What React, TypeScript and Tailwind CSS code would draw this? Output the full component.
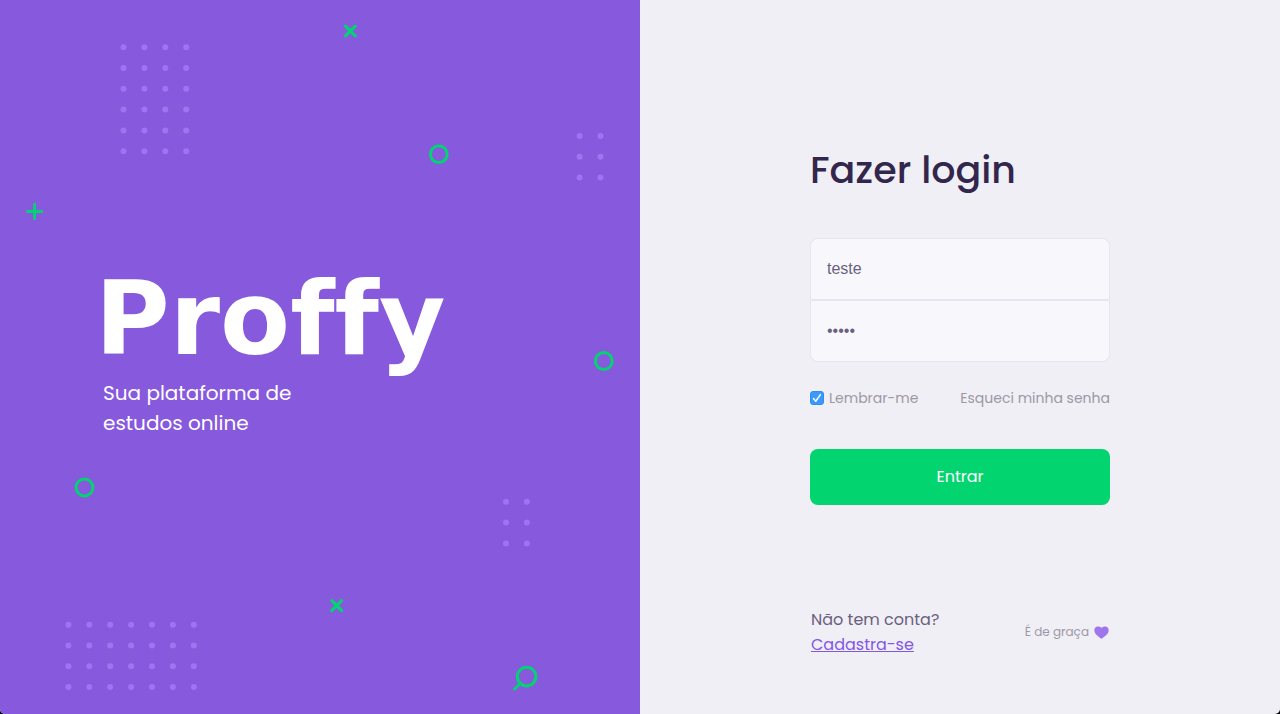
import { useState } from "react";

type DotGrid = { x: number; y: number; cols: number; rows: number };

const dotGrids: DotGrid[] = [
  { x: 123.5, y: 47.2, cols: 4, rows: 6 },
  { x: 579.6, y: 136, cols: 2, rows: 3 },
  { x: 506, y: 501.8, cols: 2, rows: 3 },
  { x: 68.4, y: 624.7, cols: 7, rows: 4 },
];

const rings = [
  { x: 438.8, y: 154.2 },
  { x: 603.8, y: 361 },
  { x: 84.5, y: 487.5 },
];

const crosses = [
  { x: 350.4, y: 31 },
  { x: 336.7, y: 605.6 },
];

function Pattern() {
  return (
    <svg
      aria-hidden="true"
      viewBox="0 0 640 714"
      preserveAspectRatio="xMidYMid slice"
      className="absolute inset-0 h-full w-full"
      fill="none"
    >
      <g fill="#a074f0">
        {dotGrids.map((grid) =>
          Array.from({ length: grid.cols * grid.rows }, (_, i) => (
            <circle
              key={`${grid.x}-${i}`}
              cx={grid.x + (i % grid.cols) * 20.9}
              cy={grid.y + Math.floor(i / grid.cols) * 20.8}
              r="3"
            />
          )),
        )}
      </g>
      <g stroke="#04d373" strokeWidth="3">
        {rings.map((ring) => (
          <circle key={ring.x} cx={ring.x} cy={ring.y} r="8.4" />
        ))}
        {crosses.map((cross) => (
          <path
            key={cross.x}
            strokeWidth="3.2"
            strokeLinecap="round"
            d={`M${cross.x - 4.9} ${cross.y - 4.9}l9.8 9.8m0 -9.8l-9.8 9.8`}
          />
        ))}
        <path strokeWidth="2.9" d="M26.3 211.5h16.6M34.6 203.2v16.6" />
        <circle cx="526.6" cy="676.6" r="9.3" />
        <path d="M520.4 683.2L513.6 690" />
      </g>
    </svg>
  );
}

export default function App() {
  const [user, setUser] = useState("teste");
  const [password, setPassword] = useState("12345");
  const [remember, setRemember] = useState(true);

  return (
    <div className="bg-black font-['Poppins','Inter',sans-serif]">
      <div className="flex min-h-screen overflow-hidden rounded-b-[5px] bg-[#f0eff5]">
        <section className="relative flex w-1/2 flex-col justify-center bg-[#8759dc] px-[103px] text-white">
          <Pattern />
          <div className="relative">
            <p className="-ml-2 pb-4 font-['DejaVu_Sans',sans-serif] text-[102px] leading-[86px] font-bold [font-kerning:none] [font-variant-ligatures:none]">
              Proffy
            </p>
            <p className="text-xl leading-[30px]">
              Sua plataforma de
              <br />
              estudos online
            </p>
          </div>
        </section>

        <main className="flex w-1/2 flex-col items-center justify-center pt-[83px]">
          <form
            className="flex w-[300px] flex-col"
            onSubmit={(event) => event.preventDefault()}
          >
            <h1 className="text-[38px] leading-[60px] font-medium text-[#32264d]">
              Fazer login
            </h1>

            <div className="mt-[38px] flex flex-col font-['Liberation_Sans',sans-serif] text-base text-[#6a6180]">
              <input
                type="text"
                aria-label="Usuário"
                value={user}
                onChange={(event) => setUser(event.target.value)}
                className="h-[62px] rounded-t-lg border border-[#e6e6f0] bg-[#f8f8fc] px-4 outline-none"
              />
              <input
                type="password"
                aria-label="Senha"
                value={password}
                onChange={(event) => setPassword(event.target.value)}
                className="h-[62px] rounded-b-lg border border-[#e6e6f0] bg-[#f8f8fc] px-4 outline-none"
              />
            </div>

            <div className="mt-6 flex items-center justify-between text-sm leading-6 text-[#9c98a6]">
              <label className="flex items-center gap-[5px]">
                <span className="grid size-[14px]">
                  <input
                    type="checkbox"
                    checked={remember}
                    onChange={(event) => setRemember(event.target.checked)}
                    className="peer col-start-1 row-start-1 size-[14px] appearance-none rounded-[3px] border border-[#9c98a6] bg-white checked:border-[#2f8eea] checked:bg-[#3b99fc]"
                  />
                  <svg
                    aria-hidden="true"
                    viewBox="0 0 14 14"
                    className="pointer-events-none invisible col-start-1 row-start-1 size-[14px] peer-checked:visible"
                    fill="none"
                    stroke="white"
                    strokeWidth="1.5"
                    strokeLinecap="round"
                    strokeLinejoin="round"
                  >
                    <path d="M3.5 7.6L5.8 10.2L10.4 3.6" />
                  </svg>
                </span>
                Lembrar-me
              </label>
              <a href="#senha">Esqueci minha senha</a>
            </div>

            <button
              type="submit"
              className="mt-[39px] h-14 rounded-lg bg-[#02d570] text-base text-white"
            >
              Entrar
            </button>
          </form>

          <footer className="mt-[102px] flex w-[300px] items-center justify-between px-px">
            <p className="text-base leading-[25px] text-[#6a6180]">
              Não tem conta?
              <br />
              <a href="#cadastro" className="text-[#8257e5] underline">
                Cadastra-se
              </a>
            </p>
            <p className="flex items-center gap-[5px] text-xs text-[#9c98a6]">
              É de graça
              <svg
                aria-hidden="true"
                viewBox="0 0 16 14"
                className="h-[13px] w-[15px]"
                fill="#9f75ee"
              >
                <path d="M8 13.6C7.4 13.6 1.4 9.6 .5 6.2C-.3 3 1.4 .6 4.1 .6C5.8 .6 7.2 1.2 8 2.2C8.8 1.2 10.2 .6 11.9 .6C14.6 .6 16.3 3 15.5 6.2C14.6 9.6 8.6 13.6 8 13.6Z" />
              </svg>
            </p>
          </footer>
        </main>
      </div>
    </div>
  );
}
